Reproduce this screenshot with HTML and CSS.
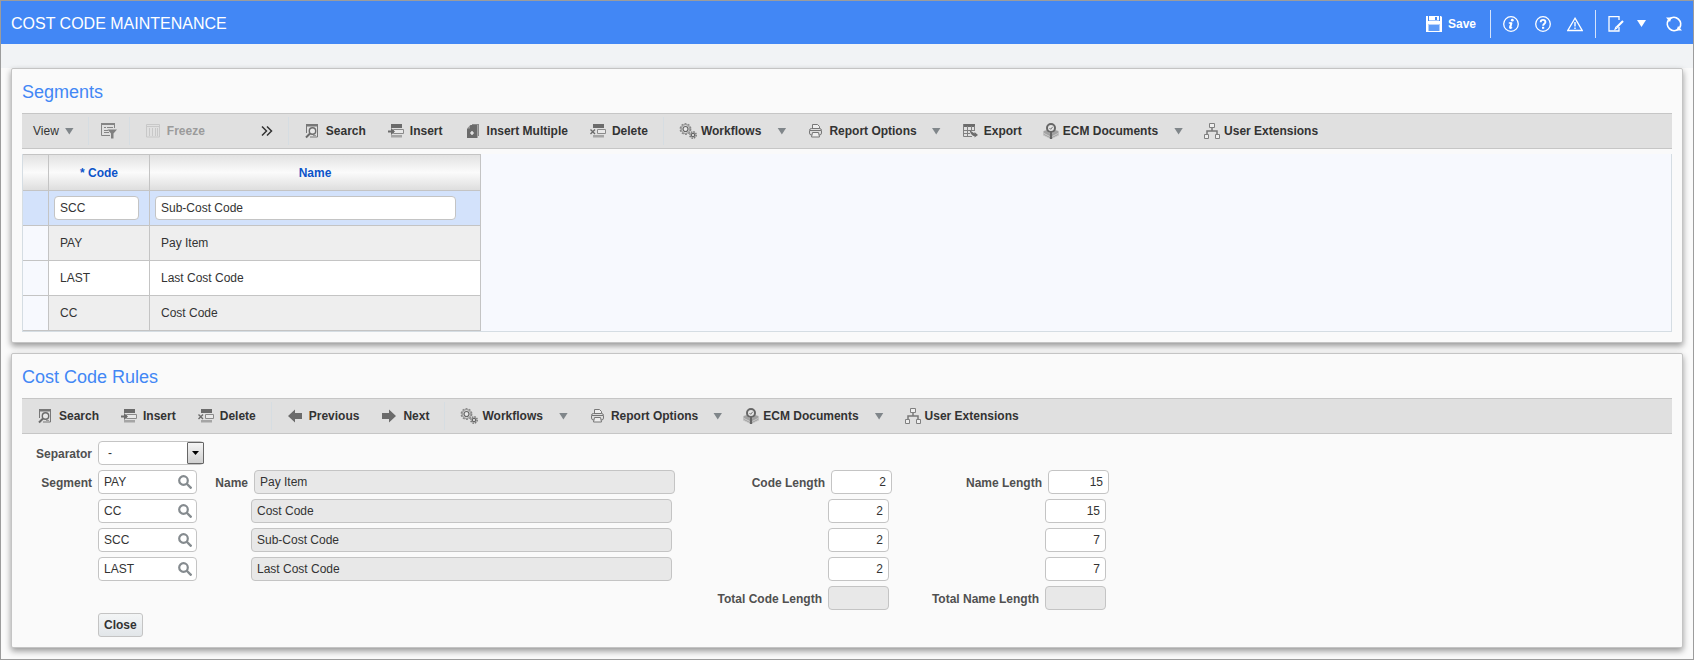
FILE: index.html
```html
<!DOCTYPE html>
<html lang="en">
<head>
<meta charset="UTF-8">
<meta name="viewport" content="width=device-width, initial-scale=1.0">
<title>Cost Code Maintenance</title>
<link rel="stylesheet" href="styles.css">
</head>
<body>

<!-- Icon set -->
<svg class="icon-defs" aria-hidden="true">
  <symbol id="i-search" viewBox="0 0 16 16">
    <path d="M2.500 10V1.500h11v12.500H6" fill="none" stroke="#777"/>
    <path d="M2 1h12v2.500H2z" fill="#777"/>
    <circle cx="8.500" cy="8" r="3.200" fill="#e8e8e8" stroke="#6b6b6b" stroke-width="1.400"/>
    <path d="M6 10.500L2 14.500" stroke="#6b6b6b" stroke-width="2"/>
    <path d="M9 12.500h3" stroke="#999"/>
  </symbol>
  <symbol id="i-insert" viewBox="0 0 16 16">
    <path d="M3 1h11v4H3z" fill="#6b6b6b"/>
    <path d="M5.500 6.500h10v4h-10z" fill="#e8e8e8" stroke="#8a8a8a"/>
    <path d="M3 12h11v2.500H3z" fill="#a5a5a5"/>
    <path d="M0 7.500h3V5l4 3.500-4 3.500V9.500H0z" fill="#6b6b6b"/>
  </symbol>
  <symbol id="i-delete" viewBox="0 0 16 16">
    <path d="M3 1h11v4H3z" fill="#6b6b6b"/>
    <path d="M7.500 6.500h8v4h-8z" fill="#e8e8e8" stroke="#8a8a8a"/>
    <path d="M3 12h11v2.500H3z" fill="#a5a5a5"/>
    <path d="M.5 6.500L5 11M5 6.500L.5 11" stroke="#6b6b6b" stroke-width="1.400"/>
  </symbol>
  <symbol id="i-multi" viewBox="0 0 16 16">
    <path d="M7 1h7v12h-1V2H7z" fill="#8a8a8a"/>
    <path d="M5.500 2H12.500V15H2V6z" fill="#6b6b6b"/>
    <path d="M2 5.500L5 2.500v3z" fill="#999"/>
    <path d="M7 8v4M5 10h4" stroke="#fff" stroke-width="1.200"/>
  </symbol>
  <symbol id="i-gears" viewBox="0 0 18 16">
    <circle cx="6.500" cy="6" r="5.200" fill="none" stroke="#888" stroke-width="1.400" stroke-dasharray="2 1.270"/>
    <circle cx="6.500" cy="6" r="4.400" fill="#ddd" stroke="#8a8a8a" stroke-width="1"/>
    <circle cx="6.500" cy="6" r="2.500" fill="#e8e8e8" stroke="#666" stroke-width="1.200"/>
    <circle cx="14" cy="12" r="3.200" fill="#ccc" stroke="#777" stroke-width="1.400" stroke-dasharray="1.500 1"/>
    <circle cx="14" cy="12" r="1.700" fill="#eee" stroke="#666" stroke-width="1.200"/>
  </symbol>
  <symbol id="i-print" viewBox="-1 0 16 16">
    <path d="M4.500 6V1.500h5l2 2V6" fill="#eee" stroke="#777"/>
    <rect x="1.500" y="5.500" width="12" height="6.500" rx="2" fill="#ddd" stroke="#777"/>
    <path d="M2 7.500h11" stroke="#777"/>
    <path d="M4.500 9.500h6l1 4.500h-8z" fill="#eee" stroke="#777"/>
  </symbol>
  <symbol id="i-export" viewBox="0 0 16 16">
    <path d="M1 1h12v3H1z" fill="#6b6b6b"/>
    <path d="M1.500 1v12.500H10M12.500 3v5M1 7.500h11M1 10.500h7M5.500 3v10.500M9.500 3v5" fill="none" stroke="#808080"/>
    <path d="M7.500 7l5 3.500V9L16 12l-3.500 2.500V13C10 13 8.500 10.500 7.500 7z" fill="#6b6b6b"/>
  </symbol>
  <symbol id="i-ecm" viewBox="0 0 16 16">
    <path d="M.5 8L4 7l4 5 4-5 3.500 1v4.500L8 16l-7.500-3.500z" fill="#a2a2a2"/>
    <path d="M1 10.500l6 3M1 12.500l6 3M15 10.500l-6 3M15 12.500l-6 3" stroke="#d5d5d5" stroke-width=".8"/>
    <circle cx="8" cy="5" r="4" fill="#e5e5e5" stroke="#666" stroke-width="2"/>
    <path d="M6.500 5l1.200 1.300 2-2.500" fill="none" stroke="#777"/>
    <path d="M8 9v7" stroke="#666" stroke-width="2.200"/>
  </symbol>
  <symbol id="i-tree" viewBox="0 0 16 16">
    <path d="M5.500.5h5v4h-5zM.5 11.500h4v4h-4zM11.500 11.500h4v4h-4z" fill="#eee" stroke="#808080"/>
    <path d="M8 5v3M3 11V8h10v3" fill="none" stroke="#777" stroke-width="1.500"/>
  </symbol>
  <symbol id="i-prev" viewBox="0 0 16 16">
    <path d="M1 8l7-6.500V5h7v6H8v3.500z" fill="#6b6b6b"/>
  </symbol>
  <symbol id="i-next" viewBox="0 0 16 16">
    <path d="M15 8L8 1.500V5H1v6h7v3.500z" fill="#6b6b6b"/>
  </symbol>
  <symbol id="i-filter" viewBox="0 0 16 16">
    <path d="M0 0h14v2H0z" fill="#858585"/>
    <path d="M.5 0v12.500H9M13.500 2v3M3 4.500h2M6 4.500h6M3 7.500h4M3 9.500h5" fill="none" stroke="#858585"/>
    <path d="M6.500 6.500H16l-3.500 4V15.500H10v-5z" fill="#808080"/>
  </symbol>
  <symbol id="i-freeze" viewBox="0 0 16 16">
    <path d="M1.500 1.500h13v12.500h-13zM1 3.500h13M4.500 5v8M7.500 5v8M10.500 5v8M12.500 5v8" fill="none" stroke="#c8c8c8"/>
  </symbol>
  <symbol id="i-more" viewBox="0 0 12 12">
    <path d="M1 1.500L5.500 6 1 10.500M6 1.500L10.500 6 6 10.500" fill="none" stroke="#333" stroke-width="1.500"/>
  </symbol>
  <symbol id="i-lens" viewBox="0 0 14 14">
    <circle cx="5.500" cy="5.500" r="4.300" fill="none" stroke="#858b8f" stroke-width="2.200"/>
    <path d="M8.500 8.500l5 5" stroke="#858b8f" stroke-width="2.400"/>
  </symbol>
  <symbol id="i-save" viewBox="0 0 16 16">
    <path d="M0 0h2v5h12V0h1l1 1v15H0z" fill="#fff"/>
    <path d="M3 0h10v4.500H3z" fill="#fff"/>
    <path d="M9 1h2v3H9z" fill="#4287f5"/>
    <path d="M2.500 8h11v7h-11z" fill="#5f9bf7"/>
    <path d="M2.500 8.500h11" stroke="#b9d3fc"/>
  </symbol>
  <symbol id="i-info" viewBox="0 0 16 16">
    <circle cx="8" cy="8" r="7.300" fill="none" stroke="#fff" stroke-width="1.300"/>
    <circle cx="9.300" cy="4.200" r="1.400" fill="#fff"/>
    <path d="M5.800 7H8l-1.200 4.500q0 1 1 .7l1.400-.7" fill="none" stroke="#fff" stroke-width="1.300"/>
    <path d="M8.500 6.500L7.200 12" stroke="#fff" stroke-width="2"/>
  </symbol>
  <symbol id="i-help" viewBox="0 0 16 16">
    <circle cx="8" cy="8" r="7.300" fill="none" stroke="#fff" stroke-width="1.300"/>
    <path d="M5.700 6.200C5.700 3 10.400 3.200 10.400 6c0 1.700-2.300 1.600-2.300 3.700" fill="none" stroke="#fff" stroke-width="1.900"/>
    <path d="M7 10.800h2.200v2H7z" fill="#fff"/>
  </symbol>
  <symbol id="i-warn" viewBox="0 0 16 16">
    <path d="M8 2.200L15.200 14.500H.8z" fill="none" stroke="#fff" stroke-width="1.300"/>
    <path d="M8 6v4.500M8 11.500V13" stroke="#fff" stroke-width="1.400"/>
  </symbol>
  <symbol id="i-edit" viewBox="0 0 16 16">
    <path d="M11 4V.7H1V15h10v-4" fill="none" stroke="#fff" stroke-width="1.300"/>
    <path d="M15 5l-6.500 6.500" stroke="#fff" stroke-width="2.200"/>
    <path d="M7.500 10.500l2 2-3.500 2z" fill="#fff"/>
  </symbol>
  <symbol id="i-refresh" viewBox="0 0 16 16">
    <path d="M3.500 3A6.800 6.800 0 0 1 13.500 12M12.500 13A6.800 6.800 0 0 1 2.500 4" fill="none" stroke="#fff" stroke-width="1.800"/>
    <path d="M0 1.500h5.500L4 6zM16 14.500h-5.500L12 10z" fill="#fff"/>
  </symbol>
</svg>

<div class="page">
  <header class="title-bar">
    <h1>COST CODE MAINTENANCE</h1>
    <div class="title-actions">
      <button type="button" class="save"><svg><use href="#i-save"/></svg>Save</button>
      <span class="divider"></span>
      <button type="button" aria-label="Information"><svg><use href="#i-info"/></svg></button>
      <button type="button" aria-label="Help"><svg><use href="#i-help"/></svg></button>
      <button type="button" aria-label="Warnings"><svg><use href="#i-warn"/></svg></button>
      <span class="divider"></span>
      <button type="button" aria-label="Edit"><svg><use href="#i-edit"/></svg></button>
      <button type="button" class="arrow" aria-label="Edit menu"></button>
      <button type="button" class="refresh" aria-label="Refresh"><svg><use href="#i-refresh"/></svg></button>
    </div>
  </header>
  <div class="band"></div>

  <main>
    <!-- Segments -->
    <section class="panel">
      <h2>Segments</h2>
      <div class="toolbar">
        <div class="group view-group">
          <button type="button" class="view">View<span class="arrow"></span></button>
        </div>
        <div class="group filter-group">
          <button type="button" aria-label="Query by example"><svg><use href="#i-filter"/></svg></button>
        </div>
        <div class="group freeze-group">
          <button type="button" disabled><svg><use href="#i-freeze"/></svg>Freeze</button>
          <button type="button" aria-label="More"><svg class="more"><use href="#i-more"/></svg></button>
        </div>
        <div class="group">
          <button type="button"><svg><use href="#i-search"/></svg>Search</button>
          <button type="button"><svg><use href="#i-insert"/></svg>Insert</button>
          <button type="button"><svg><use href="#i-multi"/></svg>Insert Multiple</button>
          <button type="button"><svg><use href="#i-delete"/></svg>Delete</button>
        </div>
        <div class="group menus">
          <button type="button" class="tight"><svg class="wide"><use href="#i-gears"/></svg>Workflows<span class="arrow"></span></button>
          <button type="button"><svg><use href="#i-print"/></svg>Report Options<span class="arrow"></span></button>
          <button type="button"><svg><use href="#i-export"/></svg>Export</button>
          <button type="button" class="tight"><svg><use href="#i-ecm"/></svg>ECM Documents<span class="arrow"></span></button>
          <button type="button" class="tight"><svg><use href="#i-tree"/></svg>User Extensions</button>
        </div>
      </div>

      <div class="grid-box">
        <table>
          <colgroup><col class="c-mark"><col class="c-code"><col class="c-name"></colgroup>
          <thead>
            <tr><th></th><th id="h-code">* Code</th><th id="h-name">Name</th></tr>
          </thead>
          <tbody>
            <tr class="selected">
              <td></td>
              <td><input type="text" value="SCC" aria-labelledby="h-code"></td>
              <td><input type="text" class="name" value="Sub-Cost Code" aria-labelledby="h-name"></td>
            </tr>
            <tr class="alt"><td></td><td>PAY</td><td>Pay Item</td></tr>
            <tr><td></td><td>LAST</td><td>Last Cost Code</td></tr>
            <tr class="alt"><td></td><td>CC</td><td>Cost Code</td></tr>
          </tbody>
        </table>
      </div>
    </section>

    <!-- Cost Code Rules -->
    <section class="panel">
      <h2>Cost Code Rules</h2>
      <div class="toolbar">
        <div class="group">
          <button type="button"><svg><use href="#i-search"/></svg>Search</button>
          <button type="button"><svg><use href="#i-insert"/></svg>Insert</button>
          <button type="button"><svg><use href="#i-delete"/></svg>Delete</button>
        </div>
        <div class="group">
          <button type="button"><svg><use href="#i-prev"/></svg>Previous</button>
          <button type="button"><svg><use href="#i-next"/></svg>Next</button>
        </div>
        <div class="group menus">
          <button type="button" class="tight"><svg class="wide"><use href="#i-gears"/></svg>Workflows<span class="arrow"></span></button>
          <button type="button"><svg><use href="#i-print"/></svg>Report Options<span class="arrow"></span></button>
          <button type="button" class="tight"><svg><use href="#i-ecm"/></svg>ECM Documents<span class="arrow"></span></button>
          <button type="button" class="tight"><svg><use href="#i-tree"/></svg>User Extensions</button>
        </div>
      </div>

      <form class="rules">
        <div class="row">
          <label for="separator">Separator</label>
          <span class="select-box">
            <select id="separator"><option>-</option></select>
          </span>
        </div>
        <div class="row first">
          <label for="seg1">Segment</label>
          <span class="lookup"><input type="text" id="seg1" value="PAY"><button type="button" aria-label="Search segment"><svg><use href="#i-lens"/></svg></button></span>
          <div class="field"><label for="name1">Name</label><input type="text" id="name1" class="name" value="Pay Item" readonly></div>
          <div class="field"><label for="code1">Code Length</label><input type="text" id="code1" class="num" value="2"></div>
          <div class="field"><label for="len1">Name Length</label><input type="text" id="len1" class="num" value="15"></div>
        </div>
        <div class="row">
          <span></span>
          <span class="lookup"><input type="text" value="CC" aria-label="Segment 2"><button type="button" aria-label="Search segment"><svg><use href="#i-lens"/></svg></button></span>
          <div class="field"><input type="text" class="name" value="Cost Code" aria-label="Name 2" readonly></div>
          <div class="field"><input type="text" class="num" value="2" aria-label="Code Length 2"></div>
          <div class="field"><input type="text" class="num" value="15" aria-label="Name Length 2"></div>
        </div>
        <div class="row">
          <span></span>
          <span class="lookup"><input type="text" value="SCC" aria-label="Segment 3"><button type="button" aria-label="Search segment"><svg><use href="#i-lens"/></svg></button></span>
          <div class="field"><input type="text" class="name" value="Sub-Cost Code" aria-label="Name 3" readonly></div>
          <div class="field"><input type="text" class="num" value="2" aria-label="Code Length 3"></div>
          <div class="field"><input type="text" class="num" value="7" aria-label="Name Length 3"></div>
        </div>
        <div class="row">
          <span></span>
          <span class="lookup"><input type="text" value="LAST" aria-label="Segment 4"><button type="button" aria-label="Search segment"><svg><use href="#i-lens"/></svg></button></span>
          <div class="field"><input type="text" class="name" value="Last Cost Code" aria-label="Name 4" readonly></div>
          <div class="field"><input type="text" class="num" value="2" aria-label="Code Length 4"></div>
          <div class="field"><input type="text" class="num" value="7" aria-label="Name Length 4"></div>
        </div>
        <div class="row">
          <span></span>
          <span></span>
          <span></span>
          <div class="field"><label for="total-code">Total Code Length</label><input type="text" id="total-code" class="num" readonly></div>
          <div class="field"><label for="total-name">Total Name Length</label><input type="text" id="total-name" class="num" readonly></div>
        </div>
        <button type="button" class="close">Close</button>
      </form>
    </section>
  </main>
</div>

</body>
</html>
```
FILE: styles.css
```css
*,
*::before,
*::after {
  box-sizing: border-box;
}

body {
  margin: 0;
  background: #fafafa;
  color: #333;
  font-family: Arial, "Liberation Sans", sans-serif;
  font-size: 12px;
}

button,
input,
select {
  font: inherit;
  color: inherit;
}

.icon-defs {
  display: none;
}

.page {
  min-height: 100vh;
  border: 1px solid #9c9c9c;
}

/* Title bar */
.title-bar {
  display: flex;
  align-items: center;
  justify-content: space-between;
  height: 43px;
  padding: 2px 11px 0 10px;
  background: #4287f5;
  color: #fff;
}

.title-bar h1 {
  margin: 0;
  font-size: 16px;
  font-weight: normal;
}

.title-actions {
  display: flex;
  align-items: center;
  gap: 16px;
}

.title-actions button {
  display: flex;
  align-items: center;
  gap: 6px;
  padding: 0;
  border: 0;
  background: none;
  font-weight: bold;
}

.title-actions svg {
  width: 16px;
  height: 16px;
}

.title-actions .save {
  margin-right: 2px;
}

.title-actions .divider {
  width: 1px;
  height: 28px;
  margin: 0 -4px;
  background: #d5e3fb;
}

.title-actions .refresh {
  margin-left: 4px;
}

.arrow {
  width: 9px;
  height: 7px;
}

.arrow,
.title-actions .arrow {
  background: #80868a;
  clip-path: polygon(0 0, 100% 0, 50% 100%);
}

.title-actions .arrow {
  margin-left: -3px;
  background: #fff;
}

.band {
  height: 24px;
  background: #f1f3f5;
}

/* Panels */
main {
  display: flex;
  flex-direction: column;
  gap: 10px;
  padding: 0 10px 11px;
}

.panel {
  padding: 10px;
  border: 1px solid #c4c4c4;
  border-radius: 2px;
  background: #fafafa;
  box-shadow: 0 3px 6px rgba(0, 0, 0, 0.4);
}

.panel h2 {
  margin: 0 0 8px;
  color: #4287f5;
  font-size: 18px;
  font-weight: normal;
  line-height: 26px;
}

/* Toolbar */
.toolbar {
  display: flex;
  align-items: center;
  height: 36px;
  border-top: 1px solid #c6c6c6;
  border-bottom: 1px solid #c6c6c6;
  background: #e0e0e0;
}

.group {
  display: flex;
  align-items: center;
  gap: 22px;
  height: 28px;
  padding: 0 15px;
  border-right: 1px solid #d6dde2;
}

.group:last-child {
  border-right: 0;
}

.menus {
  gap: 21px;
}

.toolbar button {
  display: flex;
  align-items: center;
  gap: 6px;
  padding: 0;
  border: 0;
  background: none;
  font-weight: bold;
  white-space: nowrap;
}

.toolbar button.tight {
  gap: 4px;
}

.toolbar button:disabled {
  color: #9b9b9b;
}

.toolbar svg {
  width: 16px;
  height: 16px;
}

.toolbar svg.wide {
  width: 18px;
}

.toolbar svg.more {
  width: 12px;
  height: 12px;
}

.toolbar button .arrow {
  margin-left: 9px;
}

.toolbar .tight .arrow {
  margin-left: 12px;
}

.toolbar .view {
  font-weight: normal;
}

.toolbar .view .arrow {
  margin-left: 0;
}

.view-group {
  padding: 0 14px 0 11px;
}

.filter-group {
  padding: 0 12px;
}

.freeze-group {
  gap: 56px;
  padding: 0 15px;
}

/* Segments table */
.grid-box {
  margin-top: 5px;
  border: 1px solid #d5dde3;
  border-top: 0;
  background: #f7f9fe;
}

.grid-box table {
  width: 458px;
  border-spacing: 0;
  table-layout: fixed;
}

.c-mark {
  width: 26px;
}

.c-code {
  width: 101px;
}

.grid-box th,
.grid-box td {
  height: 35px;
  padding: 0 11px;
  border-right: 1px solid #c4c4c4;
  border-bottom: 1px solid #c4c4c4;
  background: #fff;
  text-align: left;
}

.grid-box th {
  height: 37px;
  border-top: 1px solid #c4c4c4;
  background: linear-gradient(#e2e2e2, #fbfbfb 50%, #dedede);
  color: #0d54c9;
  text-align: center;
}

.grid-box .alt td {
  background: #eee;
}

.grid-box tr td:first-child {
  background: #f7f9fe;
}

.grid-box .selected td,
.grid-box .selected td:first-child {
  padding: 0 5px;
  background: #d3e2fb;
}

input,
select {
  display: block;
  width: 85px;
  height: 24px;
  padding: 0 5px;
  border: 1px solid #c4c4c4;
  border-radius: 4px;
  background: #fff;
}

input[readonly] {
  background: #e8e8e8;
}

.grid-box .name {
  width: 301px;
}

/* Rules form */
.rules {
  display: flex;
  flex-direction: column;
  gap: 5px;
  margin-top: 7px;
}

.row {
  display: grid;
  grid-template-columns: 70px 106px 465px 211px 211px;
  column-gap: 6px;
  align-items: center;
  height: 24px;
}

.row label {
  padding-top: 2px;
  color: #505050;
  font-weight: bold;
  text-align: right;
}

.field {
  display: flex;
  align-items: center;
  justify-content: flex-end;
  gap: 6px;
  padding-right: 3px;
}

.first .field {
  padding-right: 0;
}

.rules .name {
  width: 421px;
}

.rules .num {
  width: 61px;
  text-align: right;
}

.lookup {
  position: relative;
  width: 99px;
}

.lookup input {
  width: 100%;
  padding-right: 22px;
}

.lookup button {
  position: absolute;
  top: 5px;
  right: 5px;
  padding: 0;
  border: 0;
  background: none;
}

.lookup svg {
  display: block;
  width: 14px;
  height: 14px;
}

.select-box {
  position: relative;
}

.select-box select {
  width: 100%;
  padding: 0 9px;
  appearance: none;
}

.select-box::before {
  content: "";
  position: absolute;
  top: 1px;
  right: 0;
  width: 17px;
  height: 22px;
  border: 1px solid #666;
  border-radius: 1px;
  background: linear-gradient(#f5f5f5, #d0d0d0);
  pointer-events: none;
}

.select-box::after {
  content: "";
  position: absolute;
  top: 10px;
  right: 5px;
  width: 7px;
  height: 4px;
  background: #000;
  clip-path: polygon(0 0, 100% 0, 50% 100%);
  pointer-events: none;
}

.close {
  align-self: flex-start;
  height: 24px;
  margin: -2px 0 0 76px;
  padding: 0 5px;
  border: 1px solid #c4c4c4;
  border-radius: 3px;
  background: linear-gradient(#f3f5f6, #e2e6e9);
  font-weight: bold;
}
```
